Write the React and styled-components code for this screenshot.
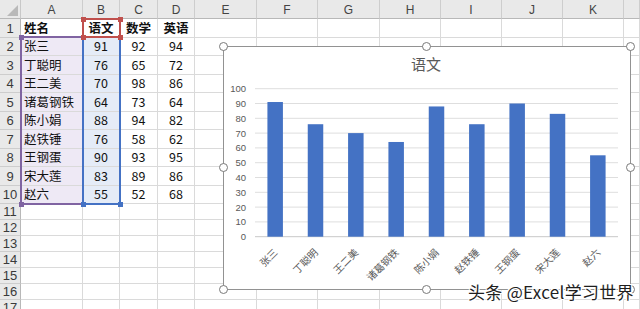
import React from 'react';
import styled, { createGlobalStyle } from 'styled-components';

const GlobalStyle = createGlobalStyle`
  html, body { margin: 0; padding: 0; background: #fff; overflow: hidden; }
  body { font-family: "Noto Sans CJK SC", "Noto Sans", sans-serif; }
`;

const COLS = [21, 62, 37, 38, 37, 62, 61, 62, 61, 61, 61, 61, 16];
const LETTERS = ['A', 'B', 'C', 'D', 'E', 'F', 'G', 'H', 'I', 'J', 'K', ''];
const ROWS = [19, 18, 19, 18, 19, 18, 19, 18, 19, 18, 16, 16, 16, 16, 16, 16, 16];

const DATA = [
  ['张三', 91, 92, 94],
  ['丁聪明', 76, 65, 72],
  ['王二美', 70, 98, 86],
  ['诸葛钢铁', 64, 73, 64],
  ['陈小娟', 88, 94, 82],
  ['赵铁锤', 76, 58, 62],
  ['王钢蛋', 90, 93, 95],
  ['宋大莲', 83, 89, 86],
  ['赵六', 55, 52, 68],
];
const HEAD = ['姓名', '语文', '数学', '英语'];

const Sheet = styled.div`
  position: relative;
  width: 640px;
  height: 309px;
  overflow: hidden;
  background: #fff;
`;

const Grid = styled.div`
  display: grid;
  grid-template-columns: ${COLS.map((c) => `${c}px`).join(' ')};
  grid-template-rows: 19px ${ROWS.map((r) => `${r}px`).join(' ')};
`;

const Corner = styled.div`
  box-sizing: border-box;
  background: #e9e9e9;
  border-right: 1px solid #c8c8c8;
  border-bottom: 1px solid #b8b8b8;
  display: flex;
  align-items: flex-end;
  justify-content: flex-end;
  padding: 0 2px 2px 0;
`;

const ColHead = styled.div`
  box-sizing: border-box;
  background: #e9e9e9;
  border-right: 1px solid #cdcdcd;
  border-bottom: 1px solid #b8b8b8;
  font-family: "Liberation Sans", "Noto Sans", sans-serif;
  font-size: 12px;
  color: #444;
  display: flex;
  align-items: center;
  justify-content: center;
  padding-top: 1px;
`;

const RowHead = styled.div`
  box-sizing: border-box;
  background: #e9e9e9;
  border-right: 1px solid #b8b8b8;
  border-bottom: 1px solid #cdcdcd;
  font-family: "Liberation Sans", "Noto Sans", sans-serif;
  font-size: 13px;
  color: #3a3a3a;
  display: flex;
  align-items: center;
  justify-content: center;
`;

const Cell = styled.div`
  box-sizing: border-box;
  border-right: 1px solid #dadada;
  border-bottom: 1px solid #dadada;
  background: ${(p) => p.$tint || '#fff'};
  font-size: 12.5px;
  font-weight: ${(p) => (p.$bold ? 700 : 400)};
  color: #111;
  display: flex;
  align-items: center;
  justify-content: ${(p) => (p.$center ? 'center' : 'flex-start')};
  padding: 0 ${(p) => (p.$center ? '0' : '3px')};
  white-space: nowrap;
  line-height: 1;
`;

const RangeBox = styled.div`
  position: absolute;
  box-sizing: border-box;
  border: 2px solid ${(p) => p.$color};
  pointer-events: none;
`;

const Grip = styled.div`
  position: absolute;
  width: 5px;
  height: 5px;
  background: ${(p) => p.$color};
  ${(p) => (p.$top ? 'top: -3.5px;' : 'bottom: -3.5px;')}
  ${(p) => (p.$left ? 'left: -3.5px;' : 'right: -3.5px;')}
`;

const ChartFrame = styled.div`
  position: absolute;
  left: 223px;
  top: 46px;
  width: 408px;
  height: 244px;
  box-sizing: border-box;
  border: 1px solid #929292;
  background: #fff;
`;

const ChartSvg = styled.svg`
  display: block;
  width: 406px;
  height: 242px;
`;

const RoundHandle = styled.div`
  position: absolute;
  width: 9px;
  height: 9px;
  box-sizing: border-box;
  border-radius: 50%;
  border: 1px solid #7a7a7a;
  background: #fff;
`;

const Watermark = styled.div`
  position: absolute;
  left: 468px;
  top: 282px;
  font-family: "Noto Sans CJK SC", sans-serif;
  font-size: 17px;
  line-height: 19px;
  letter-spacing: 0.3px;
  color: #1e1e1e;
  white-space: nowrap;
  text-shadow: 1px 0 0 #fff, -1px 0 0 #fff, 0 1px 0 #fff, 0 -1px 0 #fff,
    1px 1px 0 #fff, -1px -1px 0 #fff, 1px -1px 0 #fff, -1px 1px 0 #fff;
`;

function Range({ left, top, width, height, color }) {
  return (
    <RangeBox $color={color} style={{ left, top, width, height }}>
      <Grip $color={color} $top $left />
      <Grip $color={color} $top />
      <Grip $color={color} $left />
      <Grip $color={color} />
    </RangeBox>
  );
}

const VALUES = DATA.map((d) => d[1]);
const NAMES = DATA.map((d) => d[0]);

function Chart() {
  const x0 = 31;
  const x1 = 394;
  const cw = (x1 - x0) / 9;
  const yOf = (v) => 189.7 - v * 1.48;
  const ticks = [0, 10, 20, 30, 40, 50, 60, 70, 80, 90, 100];
  const handles = [
    [-5, -5], [197.5, -5], [401.5, -5],
    [-5, 115.5], [401.5, 115.5],
    [-5, 237.5], [197.5, 237.5], [401.5, 237.5],
  ];
  return (
    <ChartFrame>
      <ChartSvg viewBox="0 0 406 242">
        <text x="202" y="23" textAnchor="middle" fontSize="15" fill="#595959"
          fontFamily='"Noto Sans CJK SC", sans-serif'>语文</text>
        {ticks.map((t) => (
          <g key={t}>
            <line x1={x0} x2={x1} y1={yOf(t)} y2={yOf(t)}
              stroke={t === 0 ? '#c8c8c8' : '#dedede'} strokeWidth="1" />
            <text x="22" y={yOf(t)} textAnchor="end" dominantBaseline="central"
              fontSize="9.5" fill="#595959" fontFamily='"Liberation Sans", sans-serif'>{t}</text>
          </g>
        ))}
        {VALUES.map((v, i) => {
          const cx = x0 + cw * (i + 0.5);
          return (
            <rect key={i} x={cx - 7.75} y={yOf(v)} width="15.5" height={yOf(0) - yOf(v)} fill="#4472c4" />
          );
        })}
        {NAMES.map((n, i) => {
          const cx = x0 + cw * (i + 0.5);
          return (
            <text key={n} x={cx} y="203" textAnchor="end" dominantBaseline="central"
              fontSize="10" fill="#595959" transform={`rotate(-45 ${cx} 203)`}
              fontFamily='"Noto Sans CJK SC", sans-serif'>{n}</text>
          );
        })}
      </ChartSvg>
      {handles.map(([l, t], i) => (
        <RoundHandle key={i} style={{ left: l, top: t }} />
      ))}
    </ChartFrame>
  );
}

export default function App() {
  const rows = [];
  for (let r = 1; r <= ROWS.length; r += 1) {
    rows.push(<RowHead key={`rh${r}`}>{r}</RowHead>);
    for (let c = 0; c < LETTERS.length; c += 1) {
      let content = '';
      let bold = false;
      if (r === 1 && c < 4) {
        content = HEAD[c];
        bold = true;
      } else if (r >= 2 && r <= 10 && c < 4) {
        content = DATA[r - 2][c];
      }
      let tint;
      if (r >= 2 && r <= 10 && c === 0) tint = '#eee9f5';
      if (r >= 2 && r <= 10 && c === 1) tint = '#e5ecf7';
      rows.push(
        <Cell key={`c${r}-${c}`} $bold={bold} $center={c > 0} $tint={tint}>
          {content}
        </Cell>
      );
    }
  }
  return (
    <>
      <GlobalStyle />
      <Sheet>
        <Grid>
          <Corner>
            <svg width="11" height="11" viewBox="0 0 11 11">
              <polygon points="11,0 11,11 0,11" fill="#b9b9b9" />
            </svg>
          </Corner>
          {LETTERS.map((l, i) => (
            <ColHead key={`h${i}`}>{l}</ColHead>
          ))}
          {rows}
        </Grid>
        <Range left={20} top={36} width={64} height={169} color="#8064a2" />
        <Range left={82} top={36} width={39} height={169} color="#4472c4" />
        <Range left={82} top={18} width={39} height={20} color="#c0504d" />
        <Chart />
        <Watermark>头条 @Excel学习世界</Watermark>
      </Sheet>
    </>
  );
}
